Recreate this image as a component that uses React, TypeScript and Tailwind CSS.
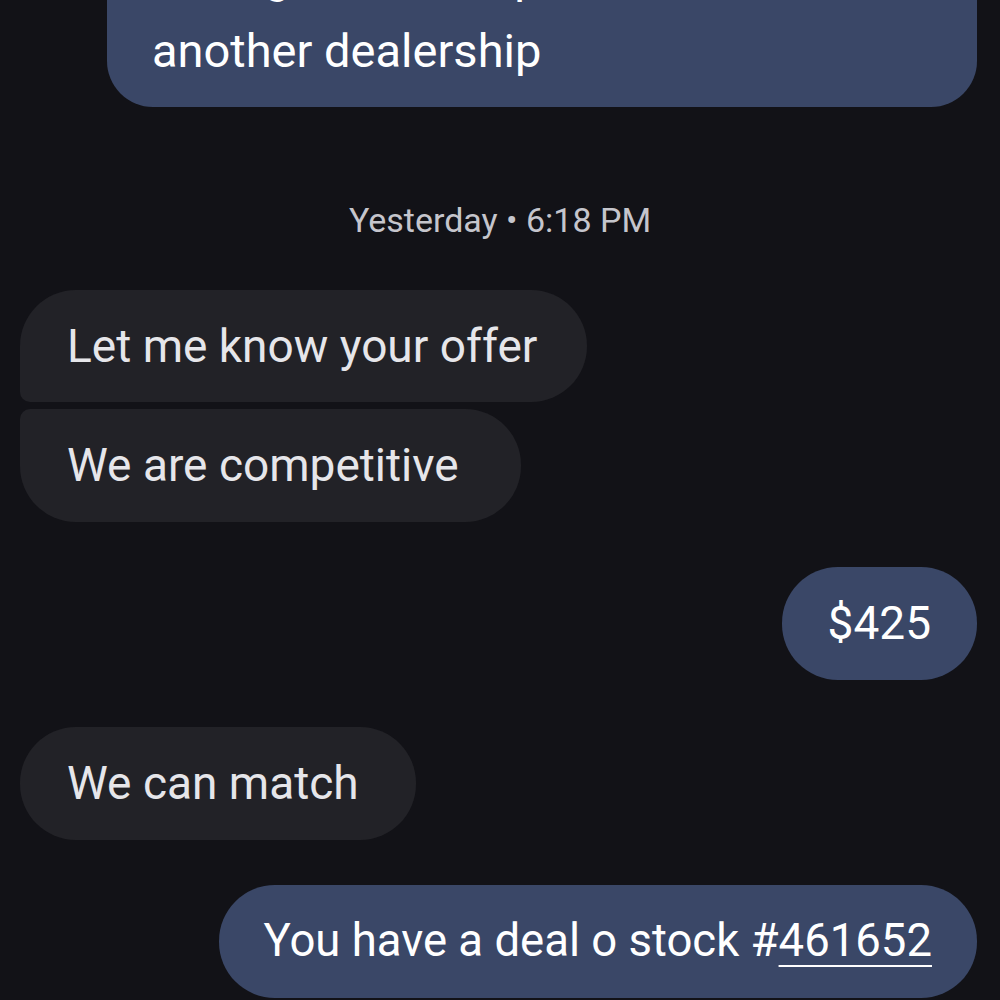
import React from "react";

const sent = "bg-[#3a4767] text-white";
const recv = "bg-[#222227] text-[#e6e6ea]";

export default function App() {
  return (
    <div className="h-[1000px] w-[1000px] overflow-hidden bg-[#121217] font-['Roboto',sans-serif]">
      <div className="flex flex-col -mt-[79px]">
        <div className={`ml-[107px] mr-[23px] rounded-[46px] ${sent} px-[45px] pt-[24px] pb-[24px] text-[47px] leading-[64px]`}>
          <div className="pb-[12px]">I can get a better price from</div>
          <div className="-mt-[2px]">another dealership</div>
        </div>

        <div className="pt-[93px] pb-[50px] text-center text-[34px] leading-[40px] text-[#c5c5cc]">
          Yesterday • 6:18 PM
        </div>

        <div className="flex flex-col items-start gap-[7px] pl-[20px]">
          <div className={`flex h-[112px] items-center rounded-tl-[56px] rounded-bl-[10px] rounded-r-[56px] pl-[47px] pr-[50px] text-[46px] ${recv}`}>
            Let me know your offer
          </div>
          <div className={`flex h-[113px] items-center rounded-tl-[10px] rounded-bl-[56px] rounded-r-[56px] pl-[47px] pr-[62px] text-[46px] ${recv}`}>
            We are competitive
          </div>
        </div>

        <div className="mt-[45px] flex justify-end pr-[23px]">
          <div className={`flex h-[113px] items-center rounded-[56px] px-[46px] text-[46px] ${sent}`}>
            $425
          </div>
        </div>

        <div className="mt-[47px] flex pl-[20px]">
          <div className={`flex h-[113px] items-center rounded-[56px] pl-[47px] pr-[57px] text-[46px] ${recv}`}>
            We can match
          </div>
        </div>

        <div className="mt-[45px] flex justify-end pr-[23px]">
          <div className={`flex h-[113px] items-center rounded-[56px] px-[45px] text-[45.5px] ${sent}`}>
            <span>
              You have a deal o stock #
              <span className="underline decoration-[2px] underline-offset-[9px]">461652</span>
            </span>
          </div>
        </div>
      </div>
    </div>
  );
}
